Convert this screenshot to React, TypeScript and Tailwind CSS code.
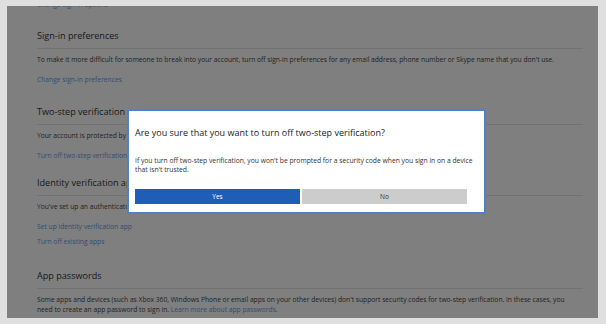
import React from 'react'

const link = 'block h-[9px] leading-[9px] text-[6.7px] text-[#6a9ae8] whitespace-nowrap'
const body = 'h-[9px] leading-[9px] text-[6.7px] text-[#444] whitespace-nowrap'

function Heading({ children, mt }: { children: React.ReactNode; mt: string }) {
  return (
    <>
      <h2 className={`${mt} h-[14px] leading-[14px] text-[9.1px] text-[#333] font-normal whitespace-nowrap`}>{children}</h2>
      <div className="mt-[5px] h-px bg-[#e4e4e4]" />
    </>
  )
}

export default function App() {
  return (
    <div className="w-[606px] h-[324px] overflow-hidden bg-[#dfdfdf] pl-[7px] pt-[6px] font-['Open_Sans',sans-serif]">
      <div className="relative w-[591px] h-[312px] overflow-hidden bg-white">
        <div className="pl-[30px] pr-[15px]">
          <a className={`${link} -mt-[6px]`}>Change sign-in options</a>

          <Heading mt="mt-[20px]">Sign-in preferences</Heading>
          <p className={`${body} mt-[6px]`}>
            To make it more difficult for someone to break into your account, turn off sign-in preferences for any email address, phone number or Skype name that you don't use.
          </p>
          <a className={`${link} mt-[11px]`}>Change sign-in preferences</a>

          <Heading mt="mt-[21px]">Two-step verification</Heading>
          <p className={`${body} mt-[6px]`}>Your account is protected by two-step verification.</p>
          <a className={`${link} mt-[11px]`}>Turn off two-step verification</a>

          <Heading mt="mt-[16px]">Identity verification apps</Heading>
          <p className={`${body} mt-[6px]`}>You've set up an authenticator app.</p>
          <a className={`${link} mt-[11px]`}>Set up identity verification app</a>
          <a className={`${link} mt-[6px]`}>Turn off existing apps</a>

          <Heading mt="mt-[23px]">App passwords</Heading>
          <p className="mt-[6px] leading-[10px] text-[6.7px] text-[#444] whitespace-nowrap">
            Some apps and devices (such as Xbox 360, Windows Phone or email apps on your other devices) don't support security codes for two-step verification. In these cases, you
            <br />
            need to create an app password to sign in. <a className="text-[#6a9ae8]">Learn more about app passwords.</a>
          </p>
        </div>

        <div className="absolute inset-0 bg-black/50" />

        <div className="absolute left-[120px] top-[103px] w-[359px] h-[105px] bg-white border-2 border-[#4f80cc] pl-[6px] pr-[17px] pt-[16px]">
          <h1 className="h-[12px] leading-[12px] text-[9px] text-[#222] font-normal whitespace-nowrap">
            Are you sure that you want to turn off two-step verification?
          </h1>
          <p className="mt-[17px] leading-[9px] text-[6.75px] text-[#333] whitespace-nowrap">
            If you turn off two-step verification, you won't be prompted for a security code when you sign in on a device
            <br />
            that isn't trusted.
          </p>
          <div className="mt-[15px] grid grid-cols-2 gap-[2px] h-[15px] text-[6.5px]">
            <button className="bg-[#1e5eb6] text-white leading-[15px]">Yes</button>
            <button className="bg-[#cccccc] text-[#333] leading-[15px]">No</button>
          </div>
        </div>
      </div>
    </div>
  )
}
